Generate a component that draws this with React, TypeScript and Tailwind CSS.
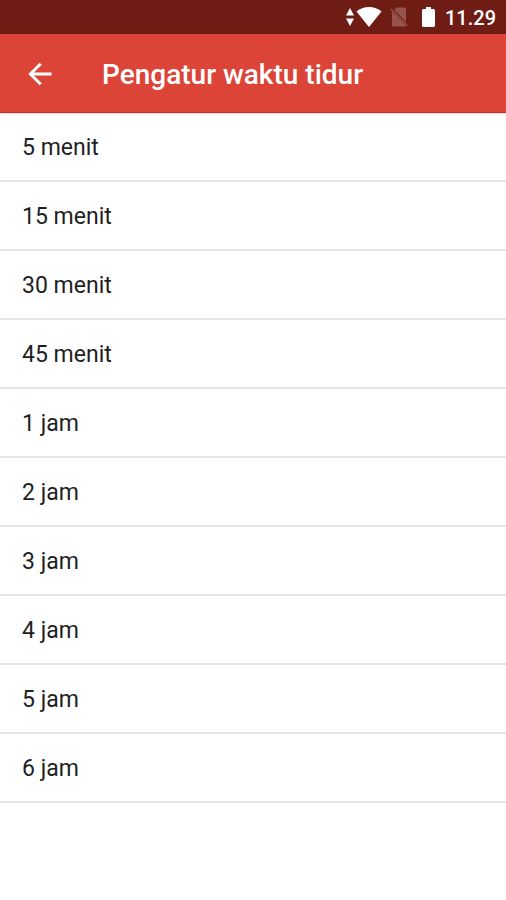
import React, { useState } from "react";

const timers = [
  "5 menit",
  "15 menit",
  "30 menit",
  "45 menit",
  "1 jam",
  "2 jam",
  "3 jam",
  "4 jam",
  "5 jam",
  "6 jam",
];

const StatusBar = () => {
  return (
    <div className="flex h-[34px] items-center justify-end bg-[#6f1c14] pr-[10px] text-white">
      <svg className="h-[18px] w-[8px]" viewBox="0 0 8 18" fill="currentColor">
        <path d="M4 0 8 7.500H0zM4 18 0 10.500h8z" />
      </svg>
      <svg className="ml-[2px] h-[20px] w-[26px]" viewBox="0 0 26 20" fill="currentColor">
        <path d="M13 20 .5 4.500C4 1.500 8 0 13 0s9 1.500 12.500 4.500z" />
      </svg>
      {/* no sim */}
      <svg className="ml-2 h-5 w-[18px] text-[#96524c]" viewBox="0 0 18 20">
        <path fill="currentColor" d="M6.500.5H15a1 1 0 0 1 1 1V15L4.200 3zM2 4.500 16 18.600a1 1 0 0 1-1 .9H3a1 1 0 0 1-1-1z" />
        <path stroke="currentColor" strokeWidth="1.500" d="M.8 2 17.200 18.500" />
      </svg>
      <svg className="ml-[14px] h-[20px] w-[13px]" viewBox="0 0 13 20" fill="currentColor">
        <path d="M12 2H9V0H4v2H1L0 3v16l1 1h11l1-1V3z" />
      </svg>
      <span className="ml-[10px] pt-[2px] text-[20px] leading-[24px] font-medium">11.29</span>
    </div>
  );
};

const App = () => {
  const [selected, setSelected] = useState<string>("");

  return (
    <div className="min-h-screen bg-white font-[Roboto,sans-serif]">
      <StatusBar />
      <header className="relative flex h-[79px] items-center border-b border-[#cf2a20] bg-[#db4437] pt-[2px] pl-6 text-white shadow">
        <button type="button" aria-label="Kembali" className="cursor-pointer">
          <svg className="h-8 w-8" viewBox="0 0 32 32" fill="none" stroke="currentColor" strokeWidth="3">
            <path d="M27.500 16H7M16.700 5.700 6.400 16l10.300 10.300" />
          </svg>
        </button>
        <h1 className="ml-[46px] pt-[2px] text-[28px] leading-[32px] font-medium">Pengatur waktu tidur</h1>
      </header>

      <ul>
        {timers.map((timer) => (
          <li key={timer} className="border-b-2 border-[#e5e5e5]">
            <button
              type="button"
              aria-pressed={selected === timer}
              onClick={() => setSelected(timer)}
              className="block h-[67px] w-full cursor-pointer px-[22px] pt-[2px] text-left text-[23px] leading-[28px] text-[#1f1f1f]"
            >
              {timer}
            </button>
          </li>
        ))}
      </ul>
    </div>
  );
};

export default App;
